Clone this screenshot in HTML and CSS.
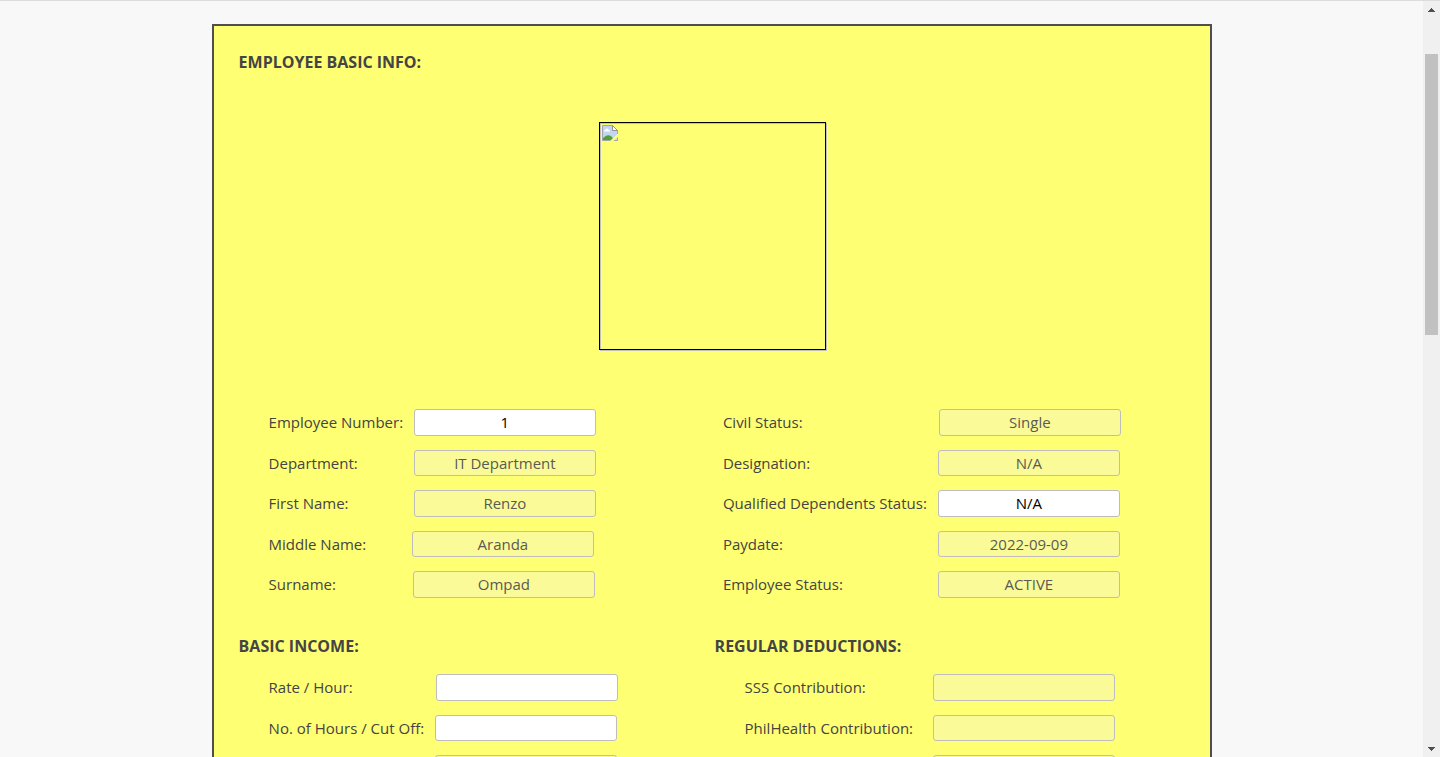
FILE: index.html
```html
<!DOCTYPE html>
<html lang="en">
<head>
<meta charset="utf-8">
<title>Employee Payroll</title>
<link rel="stylesheet" href="styles.css">
</head>
<body>
<div class="window">
  <main class="page">
    <form class="panel">
      <h2 class="heading">EMPLOYEE BASIC INFO:</h2>
      <div class="photo">
        <svg class="broken" width="16" height="16" viewBox="0 0 16 16">
          <path d="M.5.5h10l5 5v10H.5z" fill="#c3d5f5" stroke="#a3a3a8"/>
          <path d="M10.5.5v5h5z" fill="#fff" stroke="#929297"/>
          <path d="M2 6.500h6c0-1.200-.8-2-1.800-2C5.800 3 3.500 3 3.300 5 2.500 5 2 5.700 2 6.500z" fill="#fff"/>
          <path d="M1 15v-2c3-3 6-4 9-1l2 3z" fill="#4ba33a"/>
          <path d="M8 16 16 8.500v3.500l-4.500 4z" fill="#ffff73"/>
        </svg>
      </div>
      <div class="columns info">
        <div class="fields">
          <div class="row"><label class="w145">Employee Number:</label><input value="1"></div>
          <div class="row"><label class="w145">Department:</label><input value="IT Department" disabled></div>
          <div class="row"><label class="w145">First Name:</label><input value="Renzo" disabled></div>
          <div class="row"><label class="w143">Middle Name:</label><input value="Aranda" disabled></div>
          <div class="row"><label class="w144">Surname:</label><input value="Ompad" disabled></div>
        </div>
        <div class="fields">
          <div class="row"><label class="w216">Civil Status:</label><input value="Single" disabled></div>
          <div class="row"><label class="w215">Designation:</label><input value="N/A" disabled></div>
          <div class="row"><label class="w215">Qualified Dependents Status:</label><input value="N/A"></div>
          <div class="row"><label class="w215">Paydate:</label><input value="2022-09-09" disabled></div>
          <div class="row"><label class="w215">Employee Status:</label><input value="ACTIVE" disabled></div>
        </div>
      </div>
      <div class="columns pay">
        <section>
          <h2 class="heading">BASIC INCOME:</h2>
          <div class="fields indented">
            <div class="row"><label class="w167">Rate / Hour:</label><input></div>
            <div class="row"><label class="w166">No. of Hours / Cut Off:</label><input></div>
            <div class="row"><label class="w166"></label><input disabled></div>
          </div>
        </section>
        <section>
          <h2 class="heading">REGULAR DEDUCTIONS:</h2>
          <div class="fields indented">
            <div class="row"><label class="w188">SSS Contribution:</label><input disabled></div>
            <div class="row"><label class="w188">PhilHealth Contribution:</label><input disabled></div>
            <div class="row"><label class="w188"></label><input disabled></div>
          </div>
        </section>
      </div>
    </form>
  </main>
  <div class="scrollbar">
    <svg width="7" height="4" viewBox="0 0 7 4" shape-rendering="crispEdges"><path d="M3 0h1v1h1v1h1v1h1v1H0V3h1V2h1V1h1z" fill="#505050"/></svg>
    <div class="thumb"></div>
    <svg class="down" width="7" height="4" viewBox="0 0 7 4" shape-rendering="crispEdges"><path d="M0 0h7v1H6v1H5v1H4v1H3V3H2V2H1V1H0z" fill="#505050"/></svg>
  </div>
</div>
</body>
</html>
```
FILE: styles.css
```css
* { box-sizing: border-box; }
body {
  margin: 0;
  height: 757px;
  overflow: hidden;
  background: #f8f8f8;
  color: #444;
  font-family: "Open Sans", sans-serif;
  font-size: 15px;
}
.window {
  display: flex;
  height: 757px;
  border-top: 1px solid #dcdcdc;
}
.page {
  flex: 1;
  overflow: hidden;
  padding: 23px 0 0 211.600px;
}
.panel {
  width: 1000px;
  height: 1200px;
  padding: 25px 25px 0;
  background: #ffff73;
  border: 2px solid #4f4f4f;
}
.heading {
  margin: 0;
  height: 22px;
  font-size: 16px;
  font-weight: 700;
  line-height: 22px;
}
.photo {
  width: 227px;
  height: 228px;
  margin: 49px 0 0 360.400px;
  padding: 2px;
  border: 1px solid #000;
  box-shadow: 1px 1px 0 #c0c0c0, inset 1px 1px 0 #c0c0c0;
}
.broken { display: block; }
.columns { display: grid; }
.info {
  grid-template-columns: 454.300px 1fr;
  padding-left: 30px;
  margin-top: 59px;
}
.pay {
  grid-template-columns: 476px 1fr;
  margin-top: 23.500px;
}
.indented { padding: 17.100px 0 0 30px; }
.row {
  display: flex;
  height: 40.500px;
  align-items: flex-start;
}
.row label {
  flex: none;
  line-height: 27px;
  white-space: nowrap;
}
.w143 { width: 143.300px; }
.w144 { width: 144.300px; }
.w145 { width: 145.300px; }
.w166 { width: 166px; }
.w167 { width: 167px; }
.w188 { width: 188px; }
.w215 { width: 215px; }
.w216 { width: 216px; }
.row input {
  width: 182px;
  height: 26.500px;
  margin: 0;
  padding: 0 2px;
  border: 1px solid #bdbdbd;
  border-radius: 3px;
  background: #fff;
  color: #000;
  font: inherit;
  text-align: center;
}
.row input:disabled {
  background: #fafa98;
  color: #5a5a54;
}
.scrollbar {
  display: flex;
  flex-direction: column;
  align-items: center;
  width: 17px;
  padding: 7px 0 6px;
  background: #f0f0f0;
}
.thumb {
  width: 13px;
  height: 281px;
  margin-top: 42px;
  background: #c1c1c1;
}
.down { margin-top: auto; }
```
